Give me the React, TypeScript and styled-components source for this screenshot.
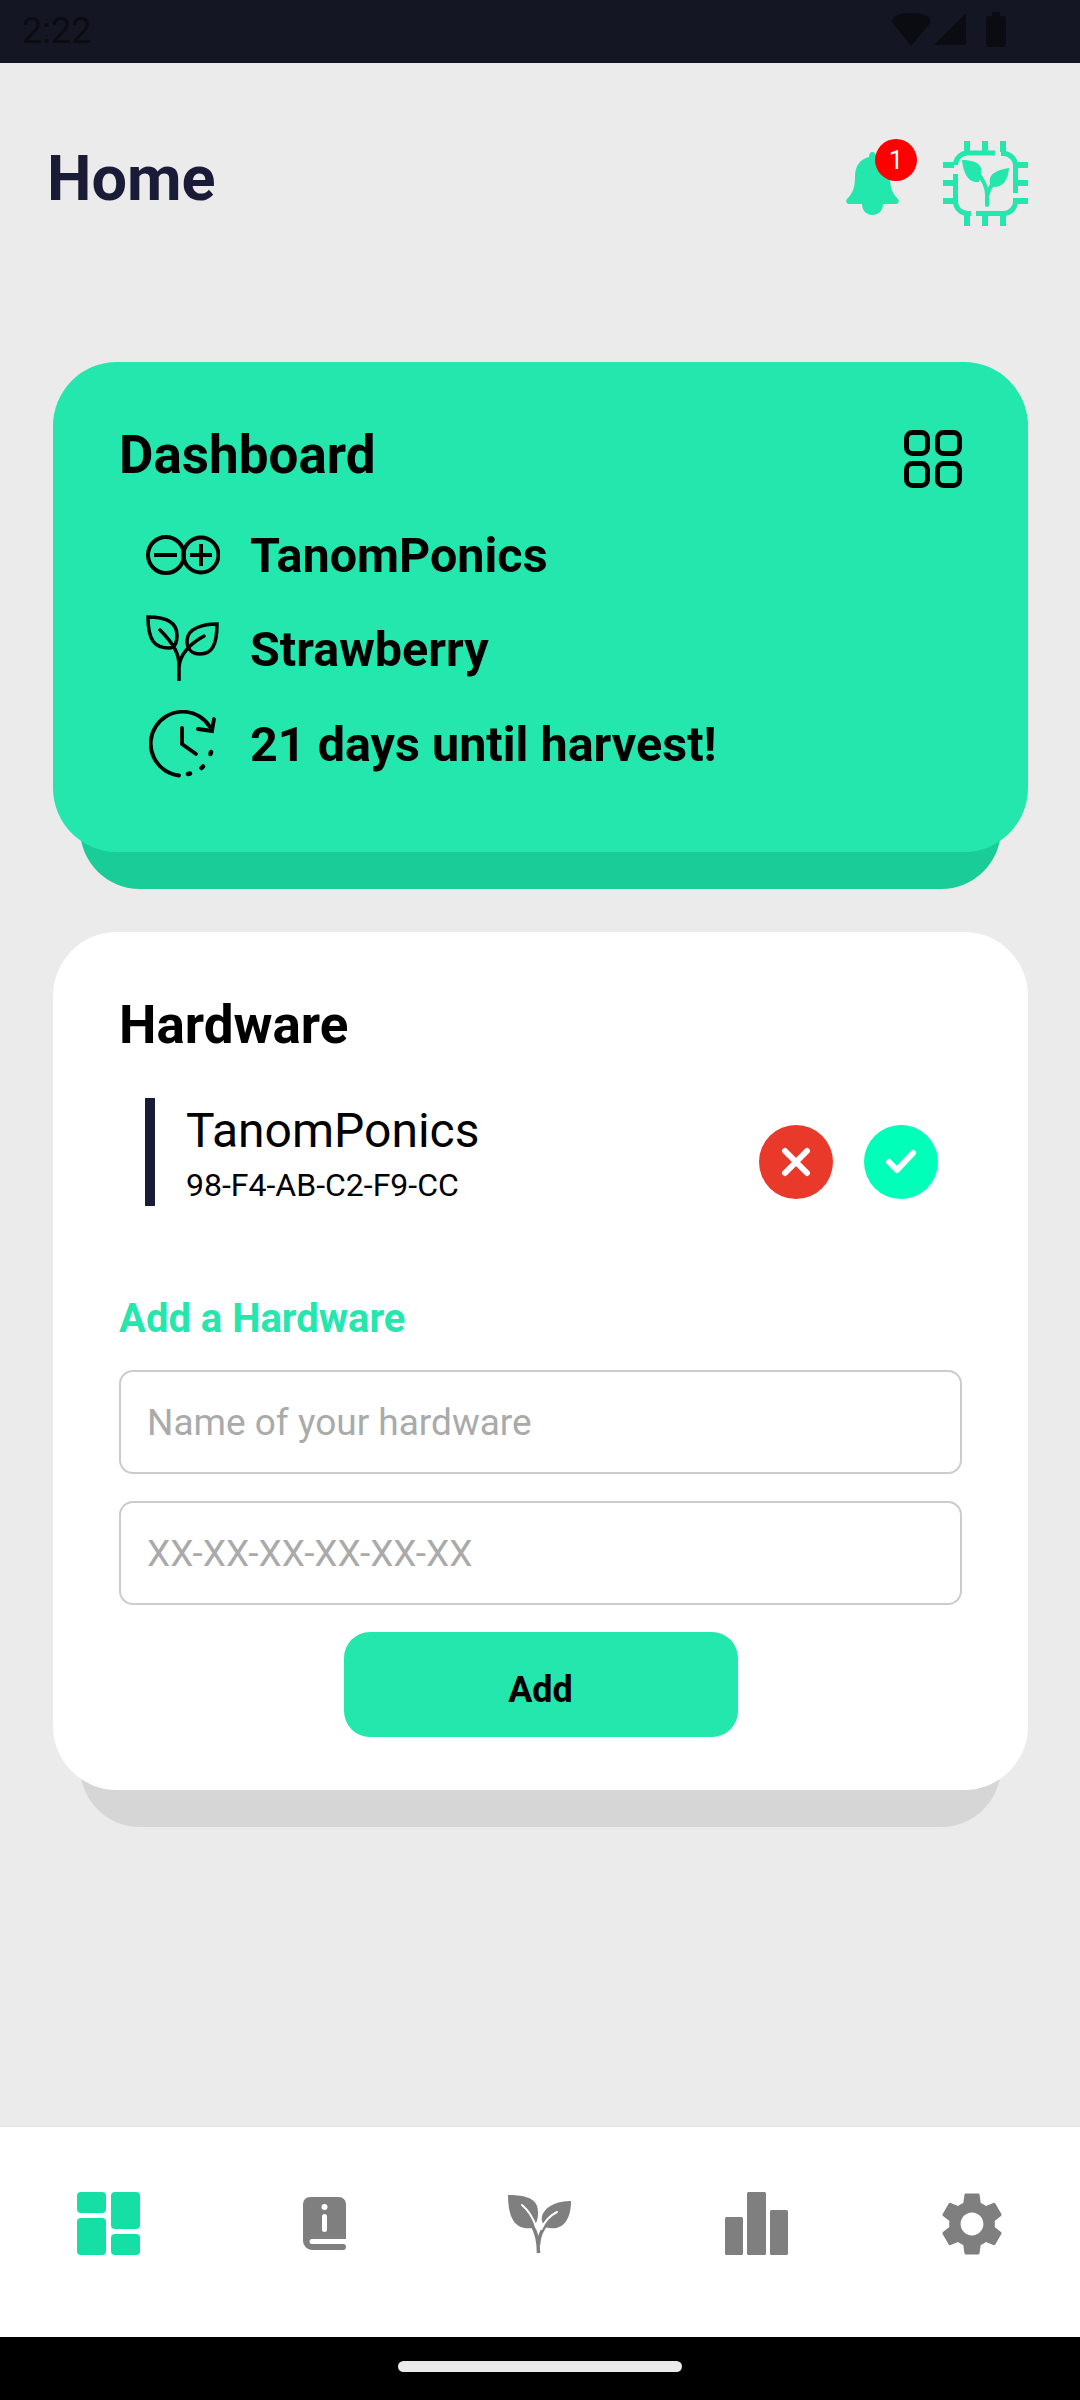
import React from "react";
import styled, { createGlobalStyle } from "styled-components";

const GREEN = "#24e7ad";
const NAVY = "#1a1b36";

const GlobalStyle = createGlobalStyle`
  html, body {
    margin: 0;
    padding: 0;
    background: #ebebeb;
  }
  * {
    box-sizing: border-box;
  }
`;

const Sprout = ({ color, vein }: { color: string; vein?: string }) => (
  <svg width="64" height="58" viewBox="0 0 64 58">
    <path
      fill={color}
      d="M0 0C13 0 26 2 29 11C31 18 30 25 27 30L24 33C9 35 0 26 0 0Z"
    />
    <path
      fill={color}
      d="M63 6C53 6 38 9 34 21C33 26 35 29 37 32C52 37 63 28 63 6Z"
    />
    <path
      fill="none"
      stroke={color}
      strokeWidth="3.5"
      d="M30.5 58C30.5 46 29 38 24 30M30.5 50C31 40 34 34 39 29"
    />
    {vein && (
      <path
        fill="none"
        stroke={vein}
        strokeWidth="2"
        strokeLinecap="round"
        d="M14 10C20 15 25 22 28.5 33M49 17C43 20 37 25 33.500 34"
      />
    )}
  </svg>
);

const ChipIcon = () => (
  <svg width="85" height="85" viewBox="0 0 85 85">
    <g fill="none" stroke={GREEN} strokeWidth="5">
      <path d="M12.5 24a12 12 0 0 1 12-12H52" />
      <path d="M58 12.5H60a12 12 0 0 1 12.5 12V52" />
      <path d="M33 72.5H60a12 12 0 0 0 12.5-12V57" />
      <path d="M12.5 33V60a12 12 0 0 0 12 12.5H28" />
      <path
        strokeWidth="6"
        d="M24 0V11M42 0V11M60 0V11M24 74V85M42 74V85M60 74V85M0 24H11M0 42H11M0 60H11M74 24H85M74 42H85M74 60H85"
      />
    </g>
    <path
      fill={GREEN}
      d="M19 19C28 19 36 21 38 27C39 32 37 38 36 41C28 42 21 37 19 19Z"
    />
    <path
      fill={GREEN}
      d="M66 27C58 28 49 31 47 37C46 41 47 44 48 46C58 47 65 42 66 27Z"
    />
    <path
      fill="none"
      stroke={GREEN}
      strokeWidth="4"
      strokeLinecap="round"
      d="M44 64V54C44 46 40 38 33 30M44 56C45 50 48 44 53 39"
    />
  </svg>
);

const BellIcon = () => (
  <svg width="53" height="63" viewBox="0 0 53 63">
    <path
      fill={GREEN}
      d="M26.5 0C29 0 30 2 30 5C39 7 44 14 44 25C44 35 46 41 52 47C54 49 52 52 50 52H3C1 52-1 49 1 47C7 41 9 35 9 25C9 14 14 7 23 5C23 2 24 0 26.5 0ZM16 52H37C37 59 32 63 26.5 63C21 63 16 59 16 52Z"
    />
  </svg>
);

const GridOutlineIcon = () => (
  <svg width="58" height="58" viewBox="0 0 58 58">
    <g fill="none" stroke="#000" strokeWidth="5">
      <rect x="2.500" y="2.500" width="21" height="21" rx="6" />
      <rect x="33.500" y="2.500" width="22" height="21" rx="6" />
      <rect x="2.500" y="33.500" width="21" height="22" rx="6" />
      <rect x="33.500" y="33.500" width="22" height="22" rx="6" />
    </g>
  </svg>
);

const BoardIcon = () => (
  <svg width="74" height="40" viewBox="0 0 74 40">
    <g fill="none" stroke="#000" strokeWidth="4">
      <circle cx="20" cy="20" r="18" />
      <circle cx="55" cy="20" r="17.5" />
      <path d="M8 20H31M44 20H66M55 9V31" />
    </g>
  </svg>
);

const PlantOutlineIcon = () => (
  <svg width="74" height="66" viewBox="0 0 74 66">
    <g fill="none" stroke="#000" strokeWidth="3.500" strokeLinecap="round">
      <path d="M2 2C16 2 31 5 31 20C31 28 29 33 23 33C9 33 2 26 2 2Z" />
      <path d="M71 9C60 9 41 12 41 26C41 35 47 39 54 39C66 39 71 30 71 9Z" />
      <path d="M33 65V50C33 40 29 30 14 15M33 52C34 40 42 30 58 21" />
    </g>
  </svg>
);

const ClockIcon = () => (
  <svg width="68" height="68" viewBox="0 0 68 68">
    <g fill="none" stroke="#000" strokeWidth="3.800" strokeLinecap="round">
      <path d="M30 65.5A32 32 0 1 1 61 17" />
      <path d="M65 9L63 21L49 19" />
      <path d="M33 18V34L47 44" />
      <path strokeWidth="4.500" d="M62 42L61.5 44M54 56.5L52.5 58M41 63.5L39 64" />
    </g>
  </svg>
);

const BookIcon = () => (
  <svg width="43" height="53" viewBox="0 0 43 53">
    <path
      fill="#7f7f7f"
      d="M7 0H36a7 7 0 0 1 7 7V42H9a2.500 2.500 0 0 0 0 5H40a3 3 0 0 1 0 6H9a9 9 0 0 1-9-9V7a7 7 0 0 1 7-7Z"
    />
    <circle cx="21.500" cy="10" r="3" fill="#fff" />
    <rect x="19" y="17" width="5" height="18" rx="2.500" fill="#fff" />
  </svg>
);

const DashIcon = () => (
  <svg width="63" height="63" viewBox="0 0 63 63">
    <g fill="#16dfa5">
      <rect x="0" y="0" width="29" height="21" rx="4" />
      <rect x="0" y="26" width="29" height="37" rx="4" />
      <rect x="34" y="0" width="29" height="37" rx="4" />
      <rect x="34" y="42" width="29" height="21" rx="4" />
    </g>
  </svg>
);

const BarsIcon = () => (
  <svg width="63" height="63" viewBox="0 0 63 63">
    <g fill="#7f7f7f">
      <rect x="0" y="25" width="18" height="38" rx="1.500" />
      <rect x="22" y="0" width="19" height="63" rx="1.500" />
      <rect x="45" y="18" width="18" height="45" rx="1.500" />
    </g>
  </svg>
);

const GearIcon = () => (
  <svg width="76" height="76" viewBox="0 0 24 24">
    <path
      fill="#7f7f7f"
      d="M19.14 12.94c.04-.3.06-.61.06-.94 0-.32-.02-.64-.07-.94l2.03-1.58c.18-.14.23-.41.12-.61l-1.920-3.320c-.12-.22-.37-.29-.59-.22l-2.390.96c-.5-.38-1.030-.7-1.620-.94l-.36-2.540c-.04-.24-.24-.41-.48-.41h-3.840c-.24 0-.43.17-.47.41l-.36 2.540c-.59.24-1.130.57-1.620.94l-2.390-.96c-.22-.08-.47 0-.59.22L2.740 8.870c-.12.21-.08.47.12.61l2.030 1.580c-.05.3-.09.63-.09.94s.02.64.07.94l-2.030 1.580c-.18.14-.23.41-.12.61l1.920 3.320c.12.22.37.29.59.22l2.390-.96c.5.38 1.030.7 1.620.94l.36 2.540c.05.24.24.41.48.41h3.840c.24 0 .44-.17.47-.41l.36-2.540c.59-.24 1.130-.56 1.620-.94l2.390.96c.22.08.47 0 .59-.22l1.920-3.320c.12-.22.07-.47-.12-.61l-2.010-1.580zM12 15.600c-1.980 0-3.600-1.620-3.600-3.600s1.620-3.600 3.600-3.600 3.600 1.620 3.600 3.600-1.620 3.600-3.600 3.600z"
    />
  </svg>
);

const App = () => {
  return (
    <Screen>
      <GlobalStyle />
      <StatusBar>
        <StatusTime>2:22</StatusTime>
        <svg width="116" height="36" viewBox="0 0 116 36">
          <g fill="#0b0b12">
            <path d="M2 10C2 4 10 1 21 1C32 1 41 4 41 10L21 34Z" />
            <path d="M76 1V33H44Z" />
            <rect x="96" y="4" width="20" height="31" rx="3" />
            <rect x="102" y="0" width="8" height="6" rx="1" />
          </g>
        </svg>
      </StatusBar>

      <Main>
        <Header>
          <PageTitle>Home</PageTitle>
          <HeaderIcons>
            <BellWrap>
              <BellIcon />
              <Badge>1</Badge>
            </BellWrap>
            <ChipIcon />
          </HeaderIcons>
        </Header>

        <DashboardCard>
          <CardHead>
            <CardTitle>Dashboard</CardTitle>
            <GridOutlineIcon />
          </CardHead>
          <InfoRow>
            <InfoIcon>
              <BoardIcon />
            </InfoIcon>
            <InfoText>TanomPonics</InfoText>
          </InfoRow>
          <InfoRow>
            <InfoIcon>
              <PlantOutlineIcon />
            </InfoIcon>
            <InfoText>Strawberry</InfoText>
          </InfoRow>
          <InfoRow>
            <InfoIcon>
              <ClockIcon />
            </InfoIcon>
            <InfoText>21 days until harvest!</InfoText>
          </InfoRow>
        </DashboardCard>

        <HardwareCard>
          <CardHead>
            <CardTitle>Hardware</CardTitle>
          </CardHead>
          <DeviceRow>
            <DeviceInfo>
              <DeviceName>TanomPonics</DeviceName>
              <DeviceMac>98-F4-AB-C2-F9-CC</DeviceMac>
            </DeviceInfo>
            <DeviceActions>
              <RoundButton $bg="#e9392a">
                <svg width="30" height="30" viewBox="0 0 30 30">
                  <path
                    d="M4 4L26 26M26 4L4 26"
                    stroke="#fff"
                    strokeWidth="6"
                    strokeLinecap="round"
                  />
                </svg>
              </RoundButton>
              <RoundButton $bg="#00ffb9">
                <svg width="32" height="26" viewBox="0 0 32 26">
                  <path
                    d="M4 13L12 21L28 4"
                    fill="none"
                    stroke="#fff"
                    strokeWidth="6"
                    strokeLinecap="round"
                    strokeLinejoin="round"
                  />
                </svg>
              </RoundButton>
            </DeviceActions>
          </DeviceRow>

          <AddTitle>Add a Hardware</AddTitle>
          <Form>
            <Field placeholder="Name of your hardware" />
            <Field placeholder="XX-XX-XX-XX-XX-XX" />
            <AddButton type="button">Add</AddButton>
          </Form>
        </HardwareCard>
      </Main>

      <BottomNav>
        <NavItem>
          <DashIcon />
        </NavItem>
        <NavItem>
          <BookIcon />
        </NavItem>
        <NavItem>
          <Sprout color="#7f7f7f" vein="#fff" />
        </NavItem>
        <NavItem>
          <BarsIcon />
        </NavItem>
        <NavItem>
          <GearIcon />
        </NavItem>
      </BottomNav>

      <SystemBar>
        <HomePill />
      </SystemBar>
    </Screen>
  );
};

export default App;

const Screen = styled.div`
  display: flex;
  flex-direction: column;
  width: 1080px;
  height: 2400px;
  overflow: hidden;
  background: #ebebeb;
  font-family: Roboto, "Liberation Sans", sans-serif;
`;

const StatusBar = styled.div`
  display: flex;
  flex: 0 0 63px;
  align-items: center;
  justify-content: space-between;
  padding: 0 74px 0 22px;
  background: #151623;

  svg {
    margin-top: -3px;
  }
`;

const StatusTime = styled.span`
  font-size: 36px;
  color: #0b0b12;
  margin-top: -2px;
`;

const Main = styled.main`
  position: relative;
  isolation: isolate;
  flex: 1;
  padding: 0 52px 0 53px;
`;

const Header = styled.header`
  display: flex;
  align-items: center;
  justify-content: space-between;
  height: 85px;
  margin: 78px 0 136px -6px;
`;

const PageTitle = styled.h1`
  margin: -10px 0 0;
  font-size: 63px;
  font-weight: 700;
  color: ${NAVY};
`;

const HeaderIcons = styled.div`
  display: flex;
  align-items: center;
  gap: 44px;
`;

const BellWrap = styled.div`
  position: relative;
  display: flex;
  width: 53px;
  height: 63px;
`;

const Badge = styled.span`
  position: absolute;
  top: -13px;
  left: 29px;
  display: flex;
  align-items: center;
  justify-content: center;
  width: 42px;
  height: 42px;
  border-radius: 50%;
  background: #ff0000;
  color: #fff;
  font-size: 26px;
`;

const Card = styled.section`
  position: relative;
  border-radius: 64px;
  padding: 50px 66px 0;

  &::after {
    content: "";
    position: absolute;
    z-index: -1;
    left: 27px;
    right: 27px;
    bottom: -37px;
    height: 120px;
    border-radius: 60px;
  }
`;

const DashboardCard = styled(Card)`
  height: 490px;
  margin-bottom: 80px;
  background: ${GREEN};

  &::after {
    background: #19cc98;
  }
`;

const HardwareCard = styled(Card)`
  height: 858px;
  background: #fff;

  &::after {
    background: #d6d6d6;
  }
`;

const CardHead = styled.div`
  display: flex;
  align-items: center;
  justify-content: space-between;
  height: 86px;
  margin-bottom: 10px;

  svg {
    margin: 8px 0 0;
  }
`;

const CardTitle = styled.h2`
  margin: 0;
  font-size: 53px;
  font-weight: 700;
  color: #000;
`;

const InfoRow = styled.div`
  display: flex;
  align-items: center;
  gap: 30px;
  height: 94.500px;
  padding-left: 27px;

  &:nth-child(3) svg {
    margin-top: -3px;
  }
`;

const InfoIcon = styled.div`
  display: flex;
  align-items: center;
  justify-content: center;
  width: 74px;
`;

const InfoText = styled.span`
  font-size: 48.500px;
  font-weight: 700;
  color: #000;
`;

const DeviceRow = styled.div`
  display: flex;
  align-items: center;
  justify-content: space-between;
  height: 108px;
  margin: 30px 24px 0 26px;
  padding-left: 31px;
  border-left: 10px solid ${NAVY};
`;

const DeviceInfo = styled.div`
  display: flex;
  flex-direction: column;
  gap: 4px;
  margin-top: 1px;
  color: #000;
`;

const DeviceName = styled.span`
  font-size: 48px;
  line-height: 60px;
`;

const DeviceMac = styled.span`
  font-size: 32px;
  line-height: 40px;
`;

const DeviceActions = styled.div`
  display: flex;
  gap: 31px;
  margin-top: 20px;
`;

const RoundButton = styled.div<{ $bg: string }>`
  display: flex;
  align-items: center;
  justify-content: center;
  width: 74px;
  height: 74px;
  border-radius: 50%;
  background: ${({ $bg }) => $bg};
`;

const AddTitle = styled.h3`
  margin: 88px 0 26px;
  font-size: 40px;
  line-height: 50px;
  font-weight: 700;
  color: ${GREEN};
`;

const Form = styled.form`
  display: flex;
  flex-direction: column;
  align-items: center;
  gap: 27px;
`;

const Field = styled.input`
  width: 100%;
  height: 104px;
  padding: 0 26px;
  border: 2.500px solid #cccccc;
  border-radius: 14px;
  background: #fff;
  font-family: inherit;
  font-size: 37px;
  color: #000;
  outline: none;

  &::placeholder {
    color: #aaaaaa;
    opacity: 1;
  }
`;

const AddButton = styled.button`
  width: 394px;
  height: 105px;
  padding-top: 11px;
  border: 0;
  border-radius: 26px;
  background: ${GREEN};
  font-family: inherit;
  font-size: 36px;
  font-weight: 700;
  color: #000;
`;

const BottomNav = styled.nav`
  display: grid;
  grid-template-columns: repeat(5, 1fr);
  flex: 0 0 210px;
  padding-bottom: 17px;
  background: #fff;
  box-shadow: 0 -1px 2px rgba(0, 0, 0, 0.04);
`;

const NavItem = styled.div`
  display: flex;
  align-items: center;
  justify-content: center;
`;

const SystemBar = styled.div`
  display: flex;
  flex: 0 0 63px;
  align-items: center;
  justify-content: center;
  background: #000;
`;

const HomePill = styled.div`
  width: 284px;
  height: 11px;
  margin-bottom: 5px;
  border-radius: 6px;
  background: #ebebeb;
`;
